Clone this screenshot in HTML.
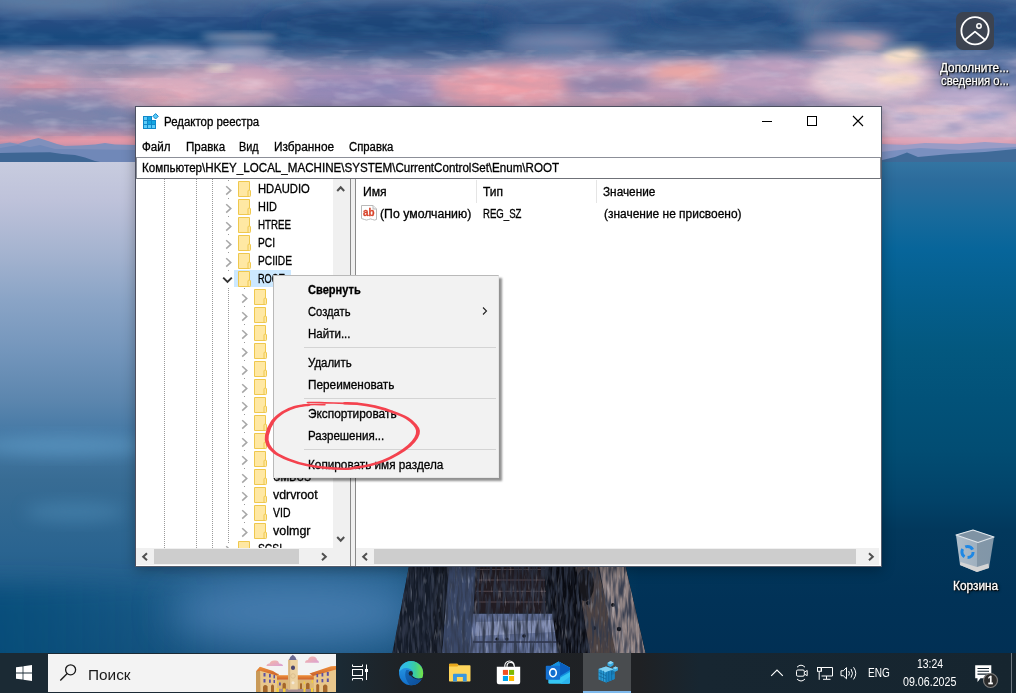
<!DOCTYPE html>
<html lang="ru"><head><meta charset="utf-8"><title>Редактор реестра</title>
<style>
html,body{margin:0;padding:0;}
body{width:1016px;height:693px;overflow:hidden;position:relative;background:#1d4f78;font-family:"Liberation Sans",sans-serif;font-size:12px;color:#000;}
#bg{position:absolute;left:0;top:0;width:1016px;height:693px;}
.abs{position:absolute;}
#win{position:absolute;left:135px;top:106px;width:747px;height:461px;background:#fff;box-sizing:border-box;border:1px solid #4d5060;border-right-color:rgba(30,40,60,.75);border-bottom-color:rgba(30,40,60,.75);box-shadow:0 3px 12px rgba(0,0,0,.3);}
.t{position:absolute;white-space:nowrap;transform-origin:0 50%;-webkit-text-stroke:.3px;}
#tree{position:absolute;left:136px;top:179px;width:197px;height:369px;overflow:hidden;}
.dl{position:absolute;width:1px;background:repeating-linear-gradient(#9a9a9a 0 1px,transparent 1px 18px);}
.vl{position:absolute;top:179px;width:1px;height:369px;background:repeating-linear-gradient(#9a9a9a 0 1px,#fff 1px 2px);}
</style></head><body>
<svg id="bg" viewBox="0 0 1016 693">
<defs>
<linearGradient id="sky" x1="0" y1="0" x2="0" y2="1"><stop offset="0.000" stop-color="#4e6c98"/><stop offset="0.055" stop-color="#37588c"/><stop offset="0.133" stop-color="#264c82"/><stop offset="0.230" stop-color="#184a7e"/><stop offset="0.279" stop-color="#2a4e82"/><stop offset="0.327" stop-color="#6a7aa0"/><stop offset="0.370" stop-color="#9a92b6"/><stop offset="0.424" stop-color="#c09cb8"/><stop offset="0.485" stop-color="#c8a0b8"/><stop offset="0.570" stop-color="#b496b6"/><stop offset="0.667" stop-color="#8a86ae"/><stop offset="0.739" stop-color="#8a88ac"/><stop offset="0.776" stop-color="#a28bae"/><stop offset="0.812" stop-color="#c090a8"/><stop offset="0.848" stop-color="#dc95a5"/><stop offset="0.879" stop-color="#b48aa8"/><stop offset="1.000" stop-color="#a98aa8"/></linearGradient>
<linearGradient id="wr" x1="0" y1="0" x2="0" y2="1"><stop offset="0.000" stop-color="#3375a2"/><stop offset="0.034" stop-color="#2c6c9c"/><stop offset="0.100" stop-color="#186a9c"/><stop offset="0.166" stop-color="#07659a"/><stop offset="0.260" stop-color="#045e8c"/><stop offset="0.354" stop-color="#03587f"/><stop offset="0.448" stop-color="#025279"/><stop offset="0.542" stop-color="#024d73"/><stop offset="0.637" stop-color="#024268"/><stop offset="0.693" stop-color="#02385c"/><stop offset="0.825" stop-color="#013257"/><stop offset="1.000" stop-color="#012e52"/></linearGradient>
<linearGradient id="wl" x1="0" y1="0" x2="0" y2="1"><stop offset="0.000" stop-color="#c8ccdf"/><stop offset="0.072" stop-color="#bec2da"/><stop offset="0.166" stop-color="#a6b4d0"/><stop offset="0.260" stop-color="#8aa4c6"/><stop offset="0.354" stop-color="#7496bc"/><stop offset="0.448" stop-color="#5c86ae"/><stop offset="0.505" stop-color="#477aa6"/><stop offset="0.599" stop-color="#386c94"/><stop offset="0.731" stop-color="#2a6490"/><stop offset="0.825" stop-color="#1f5c8a"/><stop offset="0.925" stop-color="#195481"/><stop offset="1.000" stop-color="#185080"/></linearGradient>
<linearGradient id="hm" x1="0" y1="0" x2="1" y2="0"><stop offset="0" stop-color="#fff"/><stop offset=".38" stop-color="#fff"/><stop offset=".63" stop-color="#000"/></linearGradient>
<mask id="lm"><rect x="0" y="0" width="1016" height="693" fill="url(#hm)"/></mask>
<filter id="b3" x="-50%" y="-50%" width="200%" height="200%"><feGaussianBlur stdDeviation="3"/></filter>
<filter id="b6" x="-50%" y="-50%" width="200%" height="200%"><feGaussianBlur stdDeviation="6"/></filter>
<filter id="b8" x="-50%" y="-50%" width="200%" height="200%"><feGaussianBlur stdDeviation="8"/></filter>
<filter id="b12" x="-50%" y="-50%" width="200%" height="200%"><feGaussianBlur stdDeviation="12"/></filter>
<filter id="b20" x="-50%" y="-50%" width="200%" height="200%"><feGaussianBlur stdDeviation="20"/></filter>
</defs>
<rect x="0" y="0" width="1016" height="165" fill="url(#sky)"/>
<!-- clouds -->
<ellipse cx="60" cy="4" rx="80" ry="8" fill="#6682a6" filter="url(#b8)"/>
<ellipse cx="190" cy="5" rx="70" ry="6" fill="#4a6a96" filter="url(#b8)"/>
<ellipse cx="390" cy="25" rx="130" ry="14" fill="#1c4576" filter="url(#b12)"/>
<ellipse cx="575" cy="18" rx="80" ry="18" fill="#36588a" filter="url(#b12)"/>
<ellipse cx="720" cy="10" rx="70" ry="12" fill="#1f4a7c" filter="url(#b12)"/>
<ellipse cx="835" cy="14" rx="45" ry="14" fill="#5f7aa0" filter="url(#b8)"/>
<ellipse cx="930" cy="22" rx="110" ry="26" fill="#274e82" filter="url(#b12)"/>
<ellipse cx="400" cy="50" rx="140" ry="9" fill="#3a5a8a" filter="url(#b8)"/>
<ellipse cx="710" cy="40" rx="90" ry="10" fill="#44648f" filter="url(#b8)"/>
<ellipse cx="560" cy="42" rx="60" ry="9" fill="#8a90b4" filter="url(#b8)"/>
<ellipse cx="850" cy="42" rx="50" ry="10" fill="#b4a0ba" filter="url(#b8)"/>
<ellipse cx="985" cy="80" rx="50" ry="30" fill="#4f6ea0" filter="url(#b12)"/>
<ellipse cx="90" cy="63" rx="120" ry="9" fill="#9597b5" filter="url(#b8)"/>
<ellipse cx="165" cy="55" rx="40" ry="8" fill="#a2a6c2" filter="url(#b6)"/>
<ellipse cx="240" cy="52" rx="32" ry="7" fill="#a8aac6" filter="url(#b6)"/>
<ellipse cx="240" cy="37" rx="38" ry="3.5" fill="#8a94b0" filter="url(#b3)"/>
<ellipse cx="400" cy="67" rx="130" ry="4" fill="#7080a4" filter="url(#b6)"/>
<ellipse cx="150" cy="71" rx="70" ry="3.5" fill="#6e7999" filter="url(#b6)"/>
<ellipse cx="200" cy="90" rx="80" ry="16" fill="#dcaebf" filter="url(#b8)"/>
<ellipse cx="150" cy="99" rx="45" ry="8" fill="#e4a6b4" filter="url(#b6)"/>
<ellipse cx="365" cy="90" rx="75" ry="18" fill="#9488b6" filter="url(#b8)"/>
<ellipse cx="505" cy="88" rx="68" ry="21" fill="#ee9fa8" filter="url(#b8)"/>
<ellipse cx="605" cy="84" rx="45" ry="8" fill="#8a80a8" filter="url(#b6)"/>
<ellipse cx="770" cy="78" rx="50" ry="18" fill="#c0a0c0" filter="url(#b8)"/>
<ellipse cx="860" cy="82" rx="40" ry="20" fill="#dcc0cc" filter="url(#b8)"/>
<ellipse cx="685" cy="72" rx="35" ry="8" fill="#f0a8a2" filter="url(#b6)"/>
<ellipse cx="600" cy="102" rx="100" ry="5" fill="#d8a0b0" filter="url(#b6)"/>
<ellipse cx="220" cy="68" rx="14" ry="2.5" fill="#f0e2cc" filter="url(#b3)"/>
<ellipse cx="893" cy="66" rx="12" ry="12" fill="#f8e0c8" filter="url(#b6)"/>
<ellipse cx="912" cy="55" rx="14" ry="7" fill="#f5dcc0" filter="url(#b6)"/>
<ellipse cx="895" cy="82" rx="20" ry="5" fill="#efd0c2" filter="url(#b6)"/>
<ellipse cx="862" cy="42" rx="22" ry="6" fill="#c9a8b4" filter="url(#b6)"/>
<ellipse cx="40" cy="87" rx="34" ry="6" fill="#d78f9f" filter="url(#b6)"/>
<ellipse cx="60" cy="112" rx="100" ry="12" fill="#7782aa" filter="url(#b12)"/>
<ellipse cx="960" cy="122" rx="70" ry="10" fill="#7888b4" filter="url(#b12)"/>
<ellipse cx="840" cy="118" rx="60" ry="10" fill="#a897bb" filter="url(#b12)"/>
<ellipse cx="950" cy="110" rx="60" ry="3" fill="#cfb0c6" filter="url(#b6)"/>
<ellipse cx="900" cy="116" rx="90" ry="13" fill="#b4a4c6" filter="url(#b8)"/>
<ellipse cx="870" cy="75" rx="45" ry="16" fill="#e2cad2" filter="url(#b8)"/>
<ellipse cx="960" cy="122" rx="90" ry="20" fill="#d8bcd0" filter="url(#b8)"/>
<ellipse cx="975" cy="96" rx="50" ry="12" fill="#c4b0d0" filter="url(#b8)"/>
<ellipse cx="870" cy="80" rx="62" ry="20" fill="#e8ccd6" filter="url(#b8)"/>
<ellipse cx="940" cy="110" rx="45" ry="2.500" fill="#f0c2c6" filter="url(#b3)"/>
<ellipse cx="955" cy="127" rx="9" ry="3" fill="#a49ac2" filter="url(#b3)"/>
<ellipse cx="905" cy="118" rx="12" ry="3" fill="#a8a0c6" filter="url(#b3)"/>
<ellipse cx="985" cy="116" rx="25" ry="4" fill="#a8a4cc" filter="url(#b3)"/>
<ellipse cx="900" cy="56" rx="16" ry="6" fill="#fbe0c4" filter="url(#b3)"/>
<ellipse cx="898" cy="79" rx="22" ry="5" fill="#fadcc4" filter="url(#b3)"/>
<filter id="cn" x="0" y="0" width="100%" height="100%"><feTurbulence type="fractalNoise" baseFrequency=".025 .09" numOctaves="3" seed="7"/><feColorMatrix type="matrix" values="0 0 0 0 .08  0 0 0 0 .22  0 0 0 0 .42  1.800 0 0 0 -.750"/></filter>
<filter id="cw" x="0" y="0" width="100%" height="100%"><feTurbulence type="fractalNoise" baseFrequency=".03 .1" numOctaves="3" seed="23"/><feColorMatrix type="matrix" values="0 0 0 0 .95  0 0 0 0 .85  0 0 0 0 .92  1.800 0 0 0 -.850"/></filter>
<rect x="0" y="0" width="1016" height="58" filter="url(#cn)" opacity=".4"/>
<rect x="0" y="58" width="1016" height="82" filter="url(#cn)" opacity=".2"/>
<rect x="0" y="50" width="1016" height="90" filter="url(#cw)" opacity=".32"/>
<!-- mountains -->
<rect x="50" y="139" width="90" height="6" fill="#e89aa8" filter="url(#b3)"/>
<path d="M0 144 L10 142.500 L18 144 L28 140.500 L38.500 137.900 L48 141 L57 144 L65 146 L80 145.500 L95 144.500 L105 143 L115 144.500 L135 145 L200 150 L300 158 L300 165 L0 165Z" fill="#8090bc"/>
<path d="M0 148 L18 145 L30 147 L40 145 L55 149 L70 149 L135 150 L135 165 L0 165Z" fill="#7088b8"/>
<path d="M0 153 L25 152.500 L50 152.300 L62 154 L75 155 L85 157.500 L95 161 L105 163 L0 164Z" fill="#3e6694"/>
<rect x="880" y="139" width="136" height="4" fill="#f0a8b8" filter="url(#b3)"/>
<path d="M700 158 L780 148 L830 146 L880 144 L905 145 L925 143 L960 144 L985 142 L1016 144 L1016 165 L700 165Z" fill="#9a9cc6"/>
<path d="M880 152 L920 148 L960 150 L1016 147 L1016 165 L880 165Z" fill="#7a90c0"/>
<path d="M870 163 L895 157 L907 152.500 L918 157 L950 154 L985 152 L1016 149 L1016 165 L870 165Z" fill="#3f6a98"/>
<!-- water -->
<rect x="0" y="162" width="1016" height="531" fill="url(#wr)"/>
<rect x="0" y="162" width="1016" height="531" fill="url(#wl)" mask="url(#lm)"/>
<ellipse cx="65" cy="446" rx="85" ry="10" fill="#62a0cc" opacity=".6" filter="url(#b8)"/>
<ellipse cx="75" cy="512" rx="50" ry="10" fill="#4f8db8" opacity=".5" filter="url(#b8)"/>
<!-- pier -->
<linearGradient id="dl" x1="0" y1="0" x2="1" y2="0"><stop offset="0" stop-color="#074a76" stop-opacity=".8"/><stop offset=".35" stop-color="#074a76" stop-opacity=".6"/><stop offset="1" stop-color="#074a76" stop-opacity="0"/></linearGradient>
<rect x="-40" y="585" width="260" height="110" fill="url(#dl)" filter="url(#b12)"/>
<ellipse cx="295" cy="612" rx="125" ry="34" fill="#5084b8" opacity=".8" filter="url(#b20)"/>
<clipPath id="pc"><path d="M409 566 L625.500 566 L646 655 L392 655Z"/></clipPath>
<filter id="nzd" x="0" y="0" width="100%" height="100%"><feTurbulence type="fractalNoise" baseFrequency=".35 .05" numOctaves="2" seed="4"/><feColorMatrix type="matrix" values="0 0 0 0 .03  0 0 0 0 .04  0 0 0 0 .07  0 0 0 3 -1.150"/></filter>
<filter id="nzl" x="0" y="0" width="100%" height="100%"><feTurbulence type="fractalNoise" baseFrequency=".4 .07" numOctaves="2" seed="11"/><feColorMatrix type="matrix" values="0 0 0 0 .82  0 0 0 0 .85  0 0 0 0 .95  0 0 0 2.800 -1.600"/></filter>
<g clip-path="url(#pc)">
<rect x="390" y="560" width="260" height="96" fill="#131822"/>
<path d="M409 566 L436 566 L429 655 L393 655Z" fill="#141b28"/>
<path d="M449 566 L475.500 566 L471.500 655 L442 655Z" fill="#3b4969"/>
<path d="M476.500 566 L544.500 566 L546 613 L474 613Z" fill="#221c22"/>
<path d="M477 569.500 H545 M477 580 H545 M476 591.200 H546 M476 602 H546" stroke="#54474d" stroke-width="1.100"/>
<path d="M473 613.800 L554 613.800 L559 655 L469 655Z" fill="#5f6d95"/>
<path d="M476 622 L553 620 L555 632 L475 636Z" fill="#9aa6c8" opacity=".55"/>
<path d="M473 642 H557" stroke="#2a3048" stroke-width="1.500"/>
<circle cx="497" cy="639" r="1.600" fill="#10131c"/><circle cx="507" cy="639" r="1.600" fill="#10131c"/><circle cx="524" cy="636" r="1.800" fill="#10131c"/>
<path d="M575 566 L597.500 566 L619 655 L590 655Z" fill="#4e4443"/>
<path d="M599 566 L625.500 566 L646 655 L616 655Z" fill="#918484"/>
<circle cx="588" cy="603" r="2" fill="#0c0e14"/><circle cx="594" cy="628" r="2" fill="#0c0e14"/><circle cx="613" cy="605" r="2" fill="#0c0e14"/><circle cx="619" cy="629" r="2.200" fill="#0c0e14"/>
<path d="M546 566 L576 566 L590 655 L558 655Z" fill="#0a0c13"/>
<ellipse cx="585" cy="585" rx="9" ry="16" fill="#0a0c13" opacity=".8"/>
<rect x="390" y="560" width="260" height="96" filter="url(#nzl)" opacity=".45"/>
<rect x="390" y="560" width="260" height="96" filter="url(#nzd)" opacity=".9"/>
</g>
</svg>

<div class="abs" style="left:956px;top:12px;width:38px;height:38px;border-radius:7px;background:#3c4350"></div>
<svg class="abs" style="left:956px;top:12px" width="38" height="38" viewBox="0 0 38 38"><circle cx="19" cy="18.8" r="13.6" fill="none" stroke="#fff" stroke-width="1.8"/><circle cx="23" cy="14" r="2.2" fill="none" stroke="#fff" stroke-width="1.5"/><path d="M8.8 28 L19 19.6 L29.2 28" fill="none" stroke="#fff" stroke-width="1.8" stroke-linejoin="round"/></svg>
<svg class="abs" style="left:954px;top:528px" width="42" height="46" viewBox="954 528 42 46"><defs><linearGradient id="bin" x1="0" y1="0" x2="1" y2="0"><stop offset="0" stop-color="#aebdca"/><stop offset=".55" stop-color="#9fb0bf"/><stop offset=".56" stop-color="#8397a8"/><stop offset="1" stop-color="#8196a8"/></linearGradient></defs><path d="M956 535 L973 530 L994 537 L989 568 L977 572 L960 565Z" fill="url(#bin)"/><path d="M956 535 L973 530 L994 537 L978 542.5Z" fill="#7f93a4" stroke="#dfe6ec" stroke-width="1.2" stroke-linejoin="round"/><path d="M960.5 562 L977 567 L988.5 563.5 L989 568 L977 572 L960 565Z" fill="#d4d4d4"/><circle cx="967.5" cy="552" r="5.6" fill="none" stroke="#1e88e5" stroke-width="3" stroke-dasharray="8.5 3.2"/></svg>

<span class="t" style="left:940.40px;top:59.84px;font-size:12px;line-height:16px;color:#fff;transform:scaleX(0.9826);text-shadow:1px 1px 1px #000,0 0 2px #000,1px 1px 3px #000,0 0 1px #000;">Дополните...</span>
<span class="t" style="left:941.00px;top:73.14px;font-size:12px;line-height:16px;color:#fff;transform:scaleX(0.9422);text-shadow:1px 1px 1px #000,0 0 2px #000,1px 1px 3px #000,0 0 1px #000;">сведения о...</span>
<span class="t" style="left:952.80px;top:578.34px;font-size:12px;line-height:16px;color:#fff;transform:scaleX(0.9887);text-shadow:1px 1px 1px #000,0 0 2px #000,1px 1px 3px #000,0 0 1px #000;">Корзина</span>
<div id="win"></div>

<svg class="abs" style="left:143px;top:113px" width="17" height="16" viewBox="0 0 17 16"><path d="M0 3h9v4h4v9H0z" fill="#0f88ca"/><g fill="#5ccbf8"><rect x="1" y="4" width="3" height="3"/><rect x="1" y="8" width="3" height="3"/><rect x="1" y="12" width="3" height="3"/><rect x="5" y="12" width="3" height="3"/><rect x="9" y="12" width="3" height="3"/></g><g fill="#12a6e2"><rect x="5" y="4" width="3" height="3"/><rect x="5" y="8" width="3" height="3"/><rect x="9" y="8" width="3" height="3"/></g><path d="M12.6 .6 L15.3 3.300 L12.6 6 L9.900 3.300Z" fill="#5ccbf8" stroke="#0f88ca" stroke-width="1"/></svg>
<div class="abs" style="left:762px;top:121px;width:10px;height:1px;background:#000"></div>
<div class="abs" style="left:807px;top:116px;width:8px;height:8px;border:1px solid #000"></div>
<svg class="abs" style="left:852px;top:115px" width="12" height="12" viewBox="0 0 12 12"><path d="M1 1 L11 11 M11 1 L1 11" stroke="#000" stroke-width="1.1" fill="none"/></svg>
<div class="abs" style="left:136px;top:157px;width:743px;height:20px;border:1px solid #8c8f98;border-bottom-color:#6f7178;background:#fff"></div>
<div class="abs" style="left:350px;top:179px;width:1px;height:387px;background:#8a8a8a"></div>
<div class="abs" style="left:351px;top:179px;width:4px;height:387px;background:#f0f0f0"></div>
<div class="abs" style="left:355px;top:179px;width:1px;height:387px;background:#8a8a8a"></div>
<div class="abs" style="left:476px;top:180px;width:1px;height:23px;background:#e5e5e5"></div>
<div class="abs" style="left:596px;top:180px;width:1px;height:23px;background:#e5e5e5"></div>
<svg class="abs" style="left:361px;top:205px" width="17" height="16" viewBox="0 0 17 16"><path d="M.5 .5h11.5l3.5 3.5v10.5q-2 1.2-4 0t-4 0t-4 0l-3-1z" fill="#fff" stroke="#b9b9b9"/><path d="M12 .5v3.5h3.5" fill="#eee" stroke="#b9b9b9"/></svg>

<div class="vl" style="left:164px"></div><div class="vl" style="left:196px"></div><div class="vl" style="left:212px"></div><div class="dl" style="left:228px;top:180px;height:100px"></div><div class="vl" style="left:228px;top:288px;height:255px"></div><div class="dl" style="left:244px;top:288px;height:250px"></div>
<svg class="abs" style="left:225px;top:185px" width="8" height="11" viewBox="0 0 8 11"><path d="M1.2 1.2 L5.8 5.4 L1.2 9.6" fill="none" stroke="#a6a6a6" stroke-width="1.5"/></svg>
<svg class="abs" style="left:238px;top:181px" width="14" height="17" viewBox="0 0 14 17"><path d="M.5 .5h11v8.700h.2q.8 0 .8 .8v4.700q0 .8-.8 .8H.5z" fill="#ffe8a3" stroke="#efc84e"/><path d="M10 15v-5q0-.8 .8-.8h.7" fill="none" stroke="#efc84e"/></svg>
<svg class="abs" style="left:225px;top:203px" width="8" height="11" viewBox="0 0 8 11"><path d="M1.2 1.2 L5.8 5.4 L1.2 9.6" fill="none" stroke="#a6a6a6" stroke-width="1.5"/></svg>
<svg class="abs" style="left:238px;top:199px" width="14" height="17" viewBox="0 0 14 17"><path d="M.5 .5h11v8.700h.2q.8 0 .8 .8v4.700q0 .8-.8 .8H.5z" fill="#ffe8a3" stroke="#efc84e"/><path d="M10 15v-5q0-.8 .8-.8h.7" fill="none" stroke="#efc84e"/></svg>
<svg class="abs" style="left:225px;top:221px" width="8" height="11" viewBox="0 0 8 11"><path d="M1.2 1.2 L5.8 5.4 L1.2 9.6" fill="none" stroke="#a6a6a6" stroke-width="1.5"/></svg>
<svg class="abs" style="left:238px;top:217px" width="14" height="17" viewBox="0 0 14 17"><path d="M.5 .5h11v8.700h.2q.8 0 .8 .8v4.700q0 .8-.8 .8H.5z" fill="#ffe8a3" stroke="#efc84e"/><path d="M10 15v-5q0-.8 .8-.8h.7" fill="none" stroke="#efc84e"/></svg>
<svg class="abs" style="left:225px;top:239px" width="8" height="11" viewBox="0 0 8 11"><path d="M1.2 1.2 L5.8 5.4 L1.2 9.6" fill="none" stroke="#a6a6a6" stroke-width="1.5"/></svg>
<svg class="abs" style="left:238px;top:235px" width="14" height="17" viewBox="0 0 14 17"><path d="M.5 .5h11v8.700h.2q.8 0 .8 .8v4.700q0 .8-.8 .8H.5z" fill="#ffe8a3" stroke="#efc84e"/><path d="M10 15v-5q0-.8 .8-.8h.7" fill="none" stroke="#efc84e"/></svg>
<svg class="abs" style="left:225px;top:257px" width="8" height="11" viewBox="0 0 8 11"><path d="M1.2 1.2 L5.8 5.4 L1.2 9.6" fill="none" stroke="#a6a6a6" stroke-width="1.5"/></svg>
<svg class="abs" style="left:238px;top:253px" width="14" height="17" viewBox="0 0 14 17"><path d="M.5 .5h11v8.700h.2q.8 0 .8 .8v4.700q0 .8-.8 .8H.5z" fill="#ffe8a3" stroke="#efc84e"/><path d="M10 15v-5q0-.8 .8-.8h.7" fill="none" stroke="#efc84e"/></svg>
<div class="abs" style="left:234px;top:270px;width:57px;height:17px;background:#cce8ff"></div>
<svg class="abs" style="left:222px;top:276px" width="11" height="8" viewBox="0 0 11 8"><path d="M1.2 1.6 L5.5 5.9 L9.8 1.6" fill="none" stroke="#333" stroke-width="1.9"/></svg>
<svg class="abs" style="left:238px;top:271px" width="14" height="17" viewBox="0 0 14 17"><path d="M.5 .5h11v8.700h.2q.8 0 .8 .8v4.700q0 .8-.8 .8H.5z" fill="#ffe8a3" stroke="#efc84e"/><path d="M10 15v-5q0-.8 .8-.8h.7" fill="none" stroke="#efc84e"/></svg>
<svg class="abs" style="left:241px;top:293px" width="8" height="11" viewBox="0 0 8 11"><path d="M1.2 1.2 L5.8 5.4 L1.2 9.6" fill="none" stroke="#a6a6a6" stroke-width="1.5"/></svg>
<svg class="abs" style="left:254px;top:289px" width="14" height="17" viewBox="0 0 14 17"><path d="M.5 .5h11v8.700h.2q.8 0 .8 .8v4.700q0 .8-.8 .8H.5z" fill="#ffe8a3" stroke="#efc84e"/><path d="M10 15v-5q0-.8 .8-.8h.7" fill="none" stroke="#efc84e"/></svg>
<svg class="abs" style="left:241px;top:311px" width="8" height="11" viewBox="0 0 8 11"><path d="M1.2 1.2 L5.8 5.4 L1.2 9.6" fill="none" stroke="#a6a6a6" stroke-width="1.5"/></svg>
<svg class="abs" style="left:254px;top:307px" width="14" height="17" viewBox="0 0 14 17"><path d="M.5 .5h11v8.700h.2q.8 0 .8 .8v4.700q0 .8-.8 .8H.5z" fill="#ffe8a3" stroke="#efc84e"/><path d="M10 15v-5q0-.8 .8-.8h.7" fill="none" stroke="#efc84e"/></svg>
<svg class="abs" style="left:241px;top:329px" width="8" height="11" viewBox="0 0 8 11"><path d="M1.2 1.2 L5.8 5.4 L1.2 9.6" fill="none" stroke="#a6a6a6" stroke-width="1.5"/></svg>
<svg class="abs" style="left:254px;top:325px" width="14" height="17" viewBox="0 0 14 17"><path d="M.5 .5h11v8.700h.2q.8 0 .8 .8v4.700q0 .8-.8 .8H.5z" fill="#ffe8a3" stroke="#efc84e"/><path d="M10 15v-5q0-.8 .8-.8h.7" fill="none" stroke="#efc84e"/></svg>
<svg class="abs" style="left:241px;top:347px" width="8" height="11" viewBox="0 0 8 11"><path d="M1.2 1.2 L5.8 5.4 L1.2 9.6" fill="none" stroke="#a6a6a6" stroke-width="1.5"/></svg>
<svg class="abs" style="left:254px;top:343px" width="14" height="17" viewBox="0 0 14 17"><path d="M.5 .5h11v8.700h.2q.8 0 .8 .8v4.700q0 .8-.8 .8H.5z" fill="#ffe8a3" stroke="#efc84e"/><path d="M10 15v-5q0-.8 .8-.8h.7" fill="none" stroke="#efc84e"/></svg>
<svg class="abs" style="left:241px;top:365px" width="8" height="11" viewBox="0 0 8 11"><path d="M1.2 1.2 L5.8 5.4 L1.2 9.6" fill="none" stroke="#a6a6a6" stroke-width="1.5"/></svg>
<svg class="abs" style="left:254px;top:361px" width="14" height="17" viewBox="0 0 14 17"><path d="M.5 .5h11v8.700h.2q.8 0 .8 .8v4.700q0 .8-.8 .8H.5z" fill="#ffe8a3" stroke="#efc84e"/><path d="M10 15v-5q0-.8 .8-.8h.7" fill="none" stroke="#efc84e"/></svg>
<svg class="abs" style="left:241px;top:383px" width="8" height="11" viewBox="0 0 8 11"><path d="M1.2 1.2 L5.8 5.4 L1.2 9.6" fill="none" stroke="#a6a6a6" stroke-width="1.5"/></svg>
<svg class="abs" style="left:254px;top:379px" width="14" height="17" viewBox="0 0 14 17"><path d="M.5 .5h11v8.700h.2q.8 0 .8 .8v4.700q0 .8-.8 .8H.5z" fill="#ffe8a3" stroke="#efc84e"/><path d="M10 15v-5q0-.8 .8-.8h.7" fill="none" stroke="#efc84e"/></svg>
<svg class="abs" style="left:241px;top:401px" width="8" height="11" viewBox="0 0 8 11"><path d="M1.2 1.2 L5.8 5.4 L1.2 9.6" fill="none" stroke="#a6a6a6" stroke-width="1.5"/></svg>
<svg class="abs" style="left:254px;top:397px" width="14" height="17" viewBox="0 0 14 17"><path d="M.5 .5h11v8.700h.2q.8 0 .8 .8v4.700q0 .8-.8 .8H.5z" fill="#ffe8a3" stroke="#efc84e"/><path d="M10 15v-5q0-.8 .8-.8h.7" fill="none" stroke="#efc84e"/></svg>
<svg class="abs" style="left:241px;top:419px" width="8" height="11" viewBox="0 0 8 11"><path d="M1.2 1.2 L5.8 5.4 L1.2 9.6" fill="none" stroke="#a6a6a6" stroke-width="1.5"/></svg>
<svg class="abs" style="left:254px;top:415px" width="14" height="17" viewBox="0 0 14 17"><path d="M.5 .5h11v8.700h.2q.8 0 .8 .8v4.700q0 .8-.8 .8H.5z" fill="#ffe8a3" stroke="#efc84e"/><path d="M10 15v-5q0-.8 .8-.8h.7" fill="none" stroke="#efc84e"/></svg>
<svg class="abs" style="left:241px;top:437px" width="8" height="11" viewBox="0 0 8 11"><path d="M1.2 1.2 L5.8 5.4 L1.2 9.6" fill="none" stroke="#a6a6a6" stroke-width="1.5"/></svg>
<svg class="abs" style="left:254px;top:433px" width="14" height="17" viewBox="0 0 14 17"><path d="M.5 .5h11v8.700h.2q.8 0 .8 .8v4.700q0 .8-.8 .8H.5z" fill="#ffe8a3" stroke="#efc84e"/><path d="M10 15v-5q0-.8 .8-.8h.7" fill="none" stroke="#efc84e"/></svg>
<svg class="abs" style="left:241px;top:455px" width="8" height="11" viewBox="0 0 8 11"><path d="M1.2 1.2 L5.8 5.4 L1.2 9.6" fill="none" stroke="#a6a6a6" stroke-width="1.5"/></svg>
<svg class="abs" style="left:254px;top:451px" width="14" height="17" viewBox="0 0 14 17"><path d="M.5 .5h11v8.700h.2q.8 0 .8 .8v4.700q0 .8-.8 .8H.5z" fill="#ffe8a3" stroke="#efc84e"/><path d="M10 15v-5q0-.8 .8-.8h.7" fill="none" stroke="#efc84e"/></svg>
<svg class="abs" style="left:241px;top:473px" width="8" height="11" viewBox="0 0 8 11"><path d="M1.2 1.2 L5.8 5.4 L1.2 9.6" fill="none" stroke="#a6a6a6" stroke-width="1.5"/></svg>
<svg class="abs" style="left:254px;top:469px" width="14" height="17" viewBox="0 0 14 17"><path d="M.5 .5h11v8.700h.2q.8 0 .8 .8v4.700q0 .8-.8 .8H.5z" fill="#ffe8a3" stroke="#efc84e"/><path d="M10 15v-5q0-.8 .8-.8h.7" fill="none" stroke="#efc84e"/></svg>
<svg class="abs" style="left:241px;top:491px" width="8" height="11" viewBox="0 0 8 11"><path d="M1.2 1.2 L5.8 5.4 L1.2 9.6" fill="none" stroke="#a6a6a6" stroke-width="1.5"/></svg>
<svg class="abs" style="left:254px;top:487px" width="14" height="17" viewBox="0 0 14 17"><path d="M.5 .5h11v8.700h.2q.8 0 .8 .8v4.700q0 .8-.8 .8H.5z" fill="#ffe8a3" stroke="#efc84e"/><path d="M10 15v-5q0-.8 .8-.8h.7" fill="none" stroke="#efc84e"/></svg>
<svg class="abs" style="left:241px;top:509px" width="8" height="11" viewBox="0 0 8 11"><path d="M1.2 1.2 L5.8 5.4 L1.2 9.6" fill="none" stroke="#a6a6a6" stroke-width="1.5"/></svg>
<svg class="abs" style="left:254px;top:505px" width="14" height="17" viewBox="0 0 14 17"><path d="M.5 .5h11v8.700h.2q.8 0 .8 .8v4.700q0 .8-.8 .8H.5z" fill="#ffe8a3" stroke="#efc84e"/><path d="M10 15v-5q0-.8 .8-.8h.7" fill="none" stroke="#efc84e"/></svg>
<svg class="abs" style="left:241px;top:527px" width="8" height="11" viewBox="0 0 8 11"><path d="M1.2 1.2 L5.8 5.4 L1.2 9.6" fill="none" stroke="#a6a6a6" stroke-width="1.5"/></svg>
<svg class="abs" style="left:254px;top:523px" width="14" height="17" viewBox="0 0 14 17"><path d="M.5 .5h11v8.700h.2q.8 0 .8 .8v4.700q0 .8-.8 .8H.5z" fill="#ffe8a3" stroke="#efc84e"/><path d="M10 15v-5q0-.8 .8-.8h.7" fill="none" stroke="#efc84e"/></svg>
<svg class="abs" style="left:225px;top:545px" width="8" height="11" viewBox="0 0 8 11"><path d="M1.2 1.2 L5.8 5.4 L1.2 9.6" fill="none" stroke="#a6a6a6" stroke-width="1.5"/></svg>
<svg class="abs" style="left:238px;top:541px" width="14" height="17" viewBox="0 0 14 17"><path d="M.5 .5h11v8.700h.2q.8 0 .8 .8v4.700q0 .8-.8 .8H.5z" fill="#ffe8a3" stroke="#efc84e"/><path d="M10 15v-5q0-.8 .8-.8h.7" fill="none" stroke="#efc84e"/></svg>
<span class="t" style="left:257.60px;top:180.74px;font-size:12px;line-height:16px;transform:scaleX(0.9360);">HDAUDIO</span>
<span class="t" style="left:257.60px;top:198.74px;font-size:12px;line-height:16px;transform:scaleX(0.9094);">HID</span>
<span class="t" style="left:257.60px;top:216.74px;font-size:12px;line-height:16px;transform:scaleX(0.8114);">HTREE</span>
<span class="t" style="left:257.60px;top:234.74px;font-size:12px;line-height:16px;transform:scaleX(0.8493);">PCI</span>
<span class="t" style="left:257.60px;top:252.74px;font-size:12px;line-height:16px;transform:scaleX(0.8497);">PCIIDE</span>
<span class="t" style="left:257.60px;top:270.74px;font-size:12px;line-height:16px;transform:scaleX(0.7643);">ROOT</span>
<span class="t" style="left:273.40px;top:288.74px;font-size:12px;line-height:16px;">ACPI_HAL</span>
<span class="t" style="left:273.40px;top:306.74px;font-size:12px;line-height:16px;">BasicDisplay</span>
<span class="t" style="left:273.40px;top:324.74px;font-size:12px;line-height:16px;">BasicRender</span>
<span class="t" style="left:273.40px;top:342.74px;font-size:12px;line-height:16px;">CompositeBus</span>
<span class="t" style="left:273.40px;top:360.74px;font-size:12px;line-height:16px;">KDNIC</span>
<span class="t" style="left:273.40px;top:378.74px;font-size:12px;line-height:16px;">mssmbios</span>
<span class="t" style="left:273.40px;top:396.74px;font-size:12px;line-height:16px;">NdisVirtualBus</span>
<span class="t" style="left:273.40px;top:414.74px;font-size:12px;line-height:16px;">RDPBUS</span>
<span class="t" style="left:273.40px;top:432.74px;font-size:12px;line-height:16px;">rdpbus</span>
<span class="t" style="left:273.40px;top:450.74px;font-size:12px;line-height:16px;">spaceport</span>
<span class="t" style="left:273.40px;top:468.74px;font-size:12px;line-height:16px;transform:scaleX(0.8767);">UMBUS</span>
<span class="t" style="left:273.40px;top:486.74px;font-size:12px;line-height:16px;transform:scaleX(1.0309);">vdrvroot</span>
<span class="t" style="left:273.40px;top:504.74px;font-size:12px;line-height:16px;transform:scaleX(0.8743);">VID</span>
<span class="t" style="left:273.40px;top:522.74px;font-size:12px;line-height:16px;transform:scaleX(1.0412);">volmgr</span>
<span class="t" style="left:257.60px;top:540.74px;font-size:12px;line-height:16px;transform:scaleX(0.8567);">SCSI</span>
<span class="t" style="left:164.20px;top:114.14px;font-size:12px;line-height:16px;transform:scaleX(0.9533);">Редактор реестра</span>
<span class="t" style="left:142.40px;top:139.04px;font-size:12px;line-height:16px;transform:scaleX(0.9656);">Файл</span>
<span class="t" style="left:185.50px;top:139.04px;font-size:12px;line-height:16px;transform:scaleX(0.9643);">Правка</span>
<span class="t" style="left:239.20px;top:139.04px;font-size:12px;line-height:16px;transform:scaleX(0.9071);">Вид</span>
<span class="t" style="left:273.70px;top:139.04px;font-size:12px;line-height:16px;transform:scaleX(0.9880);">Избранное</span>
<span class="t" style="left:348.90px;top:139.04px;font-size:12px;line-height:16px;transform:scaleX(0.9431);">Справка</span>
<span class="t" style="left:141.60px;top:160.14px;font-size:12px;line-height:16px;transform:scaleX(0.9665);">Компьютер\HKEY_LOCAL_MACHINE\SYSTEM\CurrentControlSet\Enum\ROOT</span>
<span class="t" style="left:363.30px;top:184.04px;font-size:12px;line-height:16px;transform:scaleX(1.0139);">Имя</span>
<span class="t" style="left:483.00px;top:184.04px;font-size:12px;line-height:16px;transform:scaleX(0.9992);">Тип</span>
<span class="t" style="left:603.40px;top:184.04px;font-size:12px;line-height:16px;transform:scaleX(0.9827);">Значение</span>
<span class="t" style="left:379.70px;top:206.04px;font-size:12px;line-height:16px;transform:scaleX(1.0240);">(По умолчанию)</span>
<span class="t" style="left:483.00px;top:206.04px;font-size:12px;line-height:16px;transform:scaleX(0.8018);">REG_SZ</span>
<span class="t" style="left:603.60px;top:206.04px;font-size:12px;line-height:16px;transform:scaleX(0.9956);">(значение не присвоено)</span>
<span class="t" style="left:363.20px;top:205.84px;font-size:10px;line-height:14px;font-weight:700;color:#d8432a;transform:scaleX(0.9853);">ab</span>

<div class="abs" style="left:333px;top:179px;width:17px;height:369px;background:#f0f0f0"></div>
<svg class="abs" style="left:336px;top:185px" width="10" height="8" viewBox="0 0 10 8"><path d="M1.2 6 L4.7 2.2 L8.2 6" fill="none" stroke="#505050" stroke-width="2"/></svg>
<svg class="abs" style="left:336px;top:535px" width="10" height="8" viewBox="0 0 10 8"><path d="M1.2 2 L4.7 5.8 L8.2 2" fill="none" stroke="#505050" stroke-width="2"/></svg>
<div class="abs" style="left:136px;top:548px;width:214px;height:17px;background:#f0f0f0"></div>
<div class="abs" style="left:154px;top:549px;width:145px;height:15px;background:#cdcdcd"></div>
<svg class="abs" style="left:141px;top:552px" width="8" height="10" viewBox="0 0 8 10"><path d="M6 1.2 L2.2 4.7 L6 8.2" fill="none" stroke="#505050" stroke-width="2"/></svg>
<svg class="abs" style="left:320px;top:552px" width="8" height="10" viewBox="0 0 8 10"><path d="M2 1.2 L5.8 4.7 L2 8.2" fill="none" stroke="#505050" stroke-width="2"/></svg>
<div class="abs" style="left:356px;top:548px;width:523px;height:17px;background:#f0f0f0"></div>
<div class="abs" style="left:374px;top:549px;width:482px;height:15px;background:#cdcdcd"></div>
<svg class="abs" style="left:361px;top:552px" width="8" height="10" viewBox="0 0 8 10"><path d="M6 1.2 L2.2 4.7 L6 8.2" fill="none" stroke="#505050" stroke-width="2"/></svg>
<svg class="abs" style="left:867px;top:552px" width="8" height="10" viewBox="0 0 8 10"><path d="M2 1.2 L5.8 4.7 L2 8.2" fill="none" stroke="#505050" stroke-width="2"/></svg>


<div class="abs" style="left:273px;top:275px;width:226px;height:203px;box-sizing:border-box;background:#f2f2f2;border:1px solid #b9b9b9;border-right-color:#e6e6e6;border-bottom-color:#e6e6e6;box-shadow:2.500px 2.500px 2px rgba(0,0,0,.43)"></div>
<div class="abs" style="left:304px;top:347px;width:192px;height:1px;background:#d4d4d4"></div>
<div class="abs" style="left:304px;top:398px;width:192px;height:1px;background:#d4d4d4"></div>
<div class="abs" style="left:304px;top:449px;width:192px;height:1px;background:#d4d4d4"></div>
<svg class="abs" style="left:481px;top:306px" width="8" height="10" viewBox="0 0 8 10"><path d="M2 1.5 L5.5 5 L2 8.5" fill="none" stroke="#222" stroke-width="1.1"/></svg>

<span class="t" style="left:308.30px;top:281.54px;font-size:12px;line-height:16px;font-weight:700;transform:scaleX(0.9210);">Свернуть</span>
<span class="t" style="left:308.30px;top:303.54px;font-size:12px;line-height:16px;transform:scaleX(0.9318);">Создать</span>
<span class="t" style="left:308.30px;top:325.54px;font-size:12px;line-height:16px;transform:scaleX(0.9605);">Найти...</span>
<span class="t" style="left:308.30px;top:354.54px;font-size:12px;line-height:16px;transform:scaleX(0.9536);">Удалить</span>
<span class="t" style="left:308.30px;top:376.54px;font-size:12px;line-height:16px;transform:scaleX(0.9820);">Переименовать</span>
<span class="t" style="left:308.30px;top:405.54px;font-size:12px;line-height:16px;transform:scaleX(0.9894);">Экспортировать</span>
<span class="t" style="left:308.30px;top:427.54px;font-size:12px;line-height:16px;transform:scaleX(0.9643);">Разрешения...</span>
<span class="t" style="left:308.30px;top:456.54px;font-size:12px;line-height:16px;transform:scaleX(0.9794);">Копировать имя раздела</span>

<svg class="abs" style="left:255px;top:390px" width="180" height="90" viewBox="255 390 180 90"><g transform="scale(1.6,1)" fill="none" stroke="#f4424e" stroke-linecap="round" stroke-linejoin="round"><path d="M215.62 403.30 C216.91 403.37 220.23 403.17 223.31 403.70 C226.40 404.23 230.51 405.17 234.12 406.50 C237.74 407.83 241.62 409.77 245.00 411.70 C248.38 413.63 251.98 415.88 254.38 418.10 C256.77 420.32 258.23 422.88 259.38 425.00 C260.52 427.12 261.12 428.68 261.25 430.80 C261.38 432.92 261.03 435.20 260.12 437.70 C259.22 440.20 257.74 443.10 255.81 445.80 C253.89 448.50 251.21 451.40 248.56 453.90 C245.92 456.40 242.94 458.88 239.94 460.80 C236.94 462.72 233.94 464.15 230.56 465.40 C227.19 466.65 222.18 467.72 219.69 468.30 C217.20 468.88 218.42 469.00 215.62 468.90 C212.83 468.80 206.98 468.37 202.94 467.70 C198.90 467.03 195.10 466.23 191.37 464.90 C187.65 463.57 183.81 461.73 180.56 459.70 C177.31 457.67 174.05 455.20 171.88 452.70 C169.70 450.20 168.34 447.58 167.50 444.70 C166.66 441.82 166.32 439.25 166.81 435.40 C167.30 431.55 168.76 425.45 170.44 421.60 C172.11 417.75 174.59 414.72 176.88 412.30 C179.16 409.88 181.47 408.35 184.12 407.10 C186.78 405.85 191.36 405.18 192.81 404.80" stroke-width="2.4"/><path d="M192.44 402.50 C194.22 402.55 199.26 402.67 203.12 402.80 C206.99 402.93 212.26 403.15 215.62 403.30 C218.99 403.45 222.03 403.63 223.31 403.70" stroke-width="1.7"/><path d="M184.12 407.10 C185.57 406.72 189.68 405.18 192.81 404.80 C195.95 404.42 201.25 404.80 202.94 404.80" stroke-width="1.4"/></g></svg>


<div class="abs" style="left:0;top:653px;width:1016px;height:40px;background:linear-gradient(90deg,#1b2a34 0,#1b2a34 340px,#1e2226 400px,#1f2124 640px,#172631 700px,#16252f 1016px)"></div>
<svg class="abs" style="left:16px;top:665px" width="16" height="16" viewBox="0 0 16 16"><path d="M0 2.3 L6.6 1.4 V7.6 H0Z M7.4 1.3 L16 0 V7.6 H7.4Z M0 8.4 H6.6 V14.6 L0 13.7Z M7.4 8.4 H16 V16 L7.4 14.7Z" fill="#fff"/></svg>
<div class="abs" style="left:48px;top:654px;width:288px;height:38px;background:#f3f3f3"></div>
<svg class="abs" style="left:58px;top:662px" width="22" height="22" viewBox="58 662 22 22"><circle cx="70.6" cy="669.8" r="5" fill="none" stroke="#1a1a1a" stroke-width="1.3"/><path d="M67.2 673.6 L60.3 680.4" stroke="#1a1a1a" stroke-width="1.4"/></svg>
<!-- search highlight illustration -->
<svg class="abs" style="left:250px;top:654px" width="86" height="38" viewBox="250 654 86 38">
<defs><linearGradient id="cl" x1="0" y1="0" x2="1" y2="1"><stop offset="0" stop-color="#f6b8a4"/><stop offset="1" stop-color="#dba0d2"/></linearGradient>
<linearGradient id="rf" x1="0" y1="0" x2="0" y2="1"><stop offset="0" stop-color="#f0913c"/><stop offset="1" stop-color="#c9602a"/></linearGradient></defs>
<path d="M266.5 666 q0-2.5 3-2.5 q1.5-3.5 5.5-3 q3.5-.5 4 3 q4 .3 4 2.500z" fill="url(#cl)"/>
<path d="M305 662.8 q0-2.500 3-2.800 q1-4 5-3.500 q3.500 0 4 3.500 q2 .5 2 2.800z" fill="url(#cl)"/>
<rect x="259" y="688" width="77" height="4" fill="#a48b90"/>
<path d="M256 671.500 L260 667 L279 674 L279 692 L256 692Z" fill="#e9c78c"/>
<path d="M256 671.500 L260 667 L260.500 692 L256 692Z" fill="#c99a58"/>
<path d="M256 671.500 L260 666.800 L273 671 L279 675 L276.500 675.500 L260 670.800Z" fill="url(#rf)"/>
<rect x="277" y="675.200" width="37" height="4.600" fill="url(#rf)"/>
<rect x="277" y="679.800" width="37" height="9" fill="#dcb878"/>
<path d="M309.500 673.500 L336 666 L336 692 L313.800 692 L313.800 675Z" fill="#e9c78c"/>
<path d="M309.500 673.500 L331 666.300 L336 666 L336 669.500 L313 676Z" fill="url(#rf)"/>
<rect x="288.200" y="659.700" width="9.600" height="29.800" fill="#ecd2a2"/>
<rect x="288.200" y="659.700" width="2" height="29.800" fill="#d9b680"/>
<path d="M289 660 q.3-3 3.800-5.200 q3.500 2.200 3.800 5.200z" fill="#6d6c92"/>
<rect x="291" y="665.500" width="4" height="4.500" rx="2" fill="#4a4670"/>
<circle cx="293" cy="676" r="2.300" fill="none" stroke="#d8bb8c" stroke-width=".8"/><circle cx="293" cy="682.800" r="1.500" fill="#f4ead8"/>
<g fill="#5b50a4"><rect x="263.500" y="673" width="2" height="3.500"/><rect x="269" y="674" width="1.800" height="3.500"/><rect x="273.500" y="675" width="1.500" height="3.300"/><rect x="263.500" y="679" width="2" height="3.500"/><rect x="269" y="679.500" width="1.800" height="3.300"/><rect x="273.500" y="680" width="1.500" height="3"/><rect x="316.500" y="674" width="1.600" height="3.200"/><rect x="321.500" y="673" width="1.800" height="3.500"/><rect x="326.800" y="672" width="2" height="3.800"/><rect x="316.500" y="679.500" width="1.600" height="3"/><rect x="321.500" y="679" width="1.800" height="3.300"/><rect x="326.800" y="678.500" width="2" height="3.500"/><rect x="279" y="682.500" width="1.800" height="3"/></g>
<g fill="#a4662a"><path d="M263 692 v-5.500 q2.300-2.800 4.600 0 v5.500z"/><path d="M271 692 v-6.500 q1.500-2 3 0 v6.500z"/><path d="M282.500 689 v-5 q1.700-2.500 3.400 0 v5z"/><path d="M300 689 v-5 q1-2 2 0 v5z"/><path d="M306 689 v-5 q1.800-2.500 3.600 0 v5z"/><path d="M316.200 692 v-7 q1.500-2 3 0 v7z"/><path d="M323 692 v-6 q2.200-2.800 4.400 0 v6z"/></g>
<g fill="#f5cf3a"><rect x="276.500" y="688" width="2.200" height="4"/><rect x="283" y="688.500" width="2.500" height="3.500"/><rect x="303.500" y="688" width="2" height="4"/><rect x="311" y="688" width="2.200" height="4"/><rect x="303.700" y="681.500" width="1.200" height="2.500"/><rect x="311.700" y="680" width="1.200" height="3"/><rect x="277" y="681" width="1.200" height="2.500"/></g>
</svg>
<!-- task view -->
<svg class="abs" style="left:350px;top:663px" width="20" height="19" viewBox="350 663 20 19" fill="none" stroke="#fff" stroke-width="1"><rect x="352.500" y="669.500" width="10" height="6"/><path d="M352.500 664.500 v2 h10 v-2 M352.500 680.500 v-2 h10 v2 M366.500 664.500 V680"/><rect x="365" y="669" width="3" height="3" fill="#fff" stroke="none"/></svg>
<!-- edge -->
<svg class="abs" style="left:398px;top:660px" width="26" height="26" viewBox="-13.100 -13.100 26 26">
<defs><linearGradient id="eg1" x1="0" y1="0" x2="1" y2="0"><stop offset="0" stop-color="#36b4f0"/><stop offset=".38" stop-color="#2fc3d6"/><stop offset=".68" stop-color="#3dcf9a"/><stop offset="1" stop-color="#78e442"/></linearGradient>
<linearGradient id="eg2" x1="0" y1="0" x2="0" y2="1"><stop offset="0" stop-color="#2a9fe8"/><stop offset="1" stop-color="#1270cc"/></linearGradient>
<linearGradient id="eg3" x1="0" y1="0" x2="1" y2="1"><stop offset="0" stop-color="#1568b8"/><stop offset="1" stop-color="#0b4c98"/></linearGradient></defs>
<circle cx="0" cy="0" r="12.100" fill="url(#eg2)"/>
<path d="M-4.800 -3 C-7 1 -6 6 -1.500 12 A12.100 12.100 0 0 0 10.600 5.900 C7 7.500 3 6 0 3 C-2 1 -3 -1.500 -2 -3Z" fill="url(#eg3)"/>
<path d="M-12.100 -1 A12.100 12.100 0 1 1 10.900 5.200 C7 5.500 4 5 2.200 3.900 C1 3 1.500 1 1.800 0 C2 -2 0 -4 -3 -4.800 C-7 -5.800 -10 -4 -12.100 -1Z" fill="url(#eg1)"/>
<ellipse cx="-.300" cy=".300" rx="2.100" ry="2.400" fill="#1e2226"/>
<path d="M0 2.200 C2.500 5.200 7 6.800 10.800 5.500" fill="none" stroke="#1e2226" stroke-width="1.100"/>
</svg>
<!-- explorer -->
<svg class="abs" style="left:449px;top:663px" width="22" height="19" viewBox="449 663 22 19"><path d="M449 664.600 q0-.8 .8-.8 h7.500 l1.400 1.500 h11 q.8 0 .8 .8 v14.600 q0 .8-.8 .8 h-19.900 q-.8 0-.8-.8z" fill="#ffd65c"/><path d="M449 664.600 q0-.8 .8-.8 h7.500 l1.400 1.500 l-1.200 1.200 h-8.500z" fill="#e9a81c"/><path d="M453 681.500 v-6.800 q0-1 1-1 h11.700 q1 0 1 1 v6.800 h-3.800 v-4.400 h-6 v4.400z" fill="#3b97de"/></svg>
<!-- store -->
<svg class="abs" style="left:496px;top:659px" width="25" height="26" viewBox="496 659 25 26"><path d="M504.800 667 v-1.200 a4.750 4.750 0 0 1 9.500 0 v1.200 M507 667 v-1 a3.500 3.500 0 0 1 7 0" fill="none" stroke="#fff" stroke-width="1.100"/><path d="M496.800 666.800 h23.400 v15.500 q0 2-2 2 h-19.400 q-2 0-2-2z" fill="#fff"/><rect x="502.900" y="669.900" width="5.100" height="5" fill="#f25022"/><rect x="509" y="669.900" width="5.100" height="5" fill="#7fba00"/><rect x="502.900" y="676" width="5.100" height="5" fill="#00a4ef"/><rect x="509" y="676" width="5.100" height="5" fill="#ffb900"/></svg>
<!-- outlook -->
<svg class="abs" style="left:545px;top:660px" width="26" height="25" viewBox="545 660 26 25"><path d="M548.300 667.500 L558.600 661.500 L570 667.800 V682.300 q0 1.500-1.500 1.500 H549.800 q-1.500 0-1.500-1.500z" fill="#35c6f4"/><path d="M558.600 661.500 L570 667.800 V672 L556 680 L548.300 672 V667.500z" fill="#1490df"/><path d="M558.600 661.500 L570 667.800 V670 L560 676 V664z" fill="#0a5fc0"/><path d="M560 684 L570 676.500 V682.300 q0 1.500-1.500 1.500z" fill="#2bb4ee"/><rect x="545.800" y="665.800" width="14.300" height="14" rx="1" fill="#1570d0"/><ellipse cx="553" cy="672.800" rx="3.300" ry="3.900" fill="none" stroke="#fff" stroke-width="1.600"/></svg>
<!-- regedit active -->
<div class="abs" style="left:583px;top:653px;width:48px;height:38px;background:#494c4f"></div>
<div class="abs" style="left:583px;top:691px;width:48px;height:2px;background:#7db9ec"></div>
<svg class="abs" style="left:598px;top:660px" width="21" height="23" viewBox="598 660 21 23">
<path d="M598.500 669 L606 666.500 L614.500 669.500 L614.500 679 L606 682.500 L598.500 679.500Z" fill="#2a9cd6"/>
<path d="M598.500 669 L606 666.500 L614.500 669.500 L606 672.500Z" fill="#7fd0f2"/>
<path d="M606 672.500 L614.500 669.500 L614.500 679 L606 682.500Z" fill="#1677b0"/>
<path d="M606 672 L611 670.300 L611 675 L614.500 674 V679 L606 682.500Z" fill="#1b86c4"/>
<path d="M607 666.500 L611 665.300 L614.500 666.800 V669.500 L611 670.500 L607 669Z" fill="#fff" opacity="0"/>
<path d="M598.500 672.300 L606 675.600 M598.500 675.800 L606 679 M601 669.800 V680.500 M603.500 670.800 V681.500 M606 672.500 V682.500 M608.800 671.500 V681.300 M611.600 670.500 V680.200" stroke="#0e5f92" stroke-width=".6" fill="none"/>
<path d="M607.500 663 L610.500 661 L613.500 662.500 L613.500 665 L610.500 667 L607.500 665.500Z" fill="#36a9e1"/><path d="M607.500 663 L610.500 661 L613.500 662.500 L610.500 664.300Z" fill="#8bd6f5"/>
<path d="M612.800 668 L615.500 666.500 L618 667.800 L618 670.200 L615.300 671.700 L612.800 670.400Z" fill="#36a9e1"/><path d="M612.800 668 L615.500 666.500 L618 667.800 L615.300 669.300Z" fill="#8bd6f5"/>
</svg>
<!-- tray -->
<svg class="abs" style="left:765px;top:660px" width="100" height="26" viewBox="765 660 100 26" fill="none" stroke="#fff" stroke-width="1">
<path d="M771.200 675.800 L777 670 L782.800 675.800" stroke-width="1.100"/>
<rect x="796.500" y="670" width="7.800" height="6.200" rx="1.300"/><path d="M804.600 672 L807.200 670.500 V675.700 L804.600 674.200"/><path d="M797 667.200 q4-4 8 0 M797 679 q4 4 8 0"/>
<path d="M821.500 671.500 V667.500 H832.500 V676 H821.500 M826.500 676 V679 M823 679.300 H830.500 M819.200 671.500 V679.800"/><rect x="817.500" y="667.500" width="3.600" height="3.800"/>
<path d="M841 670.800 H843.300 L846.500 667.600 V678.800 L843.300 675.700 H841Z"/><path d="M848.700 671 q1.500 2.300 0 4.600 M851 669 q3 4.300 0 8.600 M853.500 667.200 q4.500 6 0 12.200"/>
</svg>
<!-- notification -->
<svg class="abs" style="left:974px;top:664px" width="26" height="26" viewBox="974 664 26 26"><path d="M975.200 665.300 H991.300 V678.300 H980.500 L977.500 682 V678.300 H975.200Z" fill="#fff"/><path d="M977.500 668.500 H989 M977.500 671.300 H989 M977.500 674.100 H989" stroke="#16252f" stroke-width="1.100"/><circle cx="990.500" cy="680.500" r="7" fill="#2b2b2b" stroke="#7d7d7d" stroke-width="1.200"/></svg>
<div class="abs" style="left:1011px;top:653px;width:1px;height:40px;background:#6d7780"></div>

<span class="t" style="left:88.40px;top:665.30px;font-size:15px;line-height:19px;color:#1a1a1a;transform:scaleX(1.0246);-webkit-text-stroke:0;">Поиск</span>
<span class="t" style="left:867.70px;top:664.84px;font-size:12px;line-height:16px;color:#fff;transform:scaleX(0.8380);-webkit-text-stroke:0;">ENG</span>
<span class="t" style="left:916.80px;top:655.84px;font-size:12px;line-height:16px;color:#fff;transform:scaleX(0.8691);-webkit-text-stroke:0;">13:24</span>
<span class="t" style="left:903.30px;top:673.84px;font-size:12px;line-height:16px;color:#fff;transform:scaleX(0.8891);-webkit-text-stroke:0;">09.06.2025</span>
<span class="t" style="left:988.20px;top:673.29px;font-size:11px;line-height:15px;font-weight:700;color:#fff;transform:scaleX(0.8163);">1</span>
</body></html>
